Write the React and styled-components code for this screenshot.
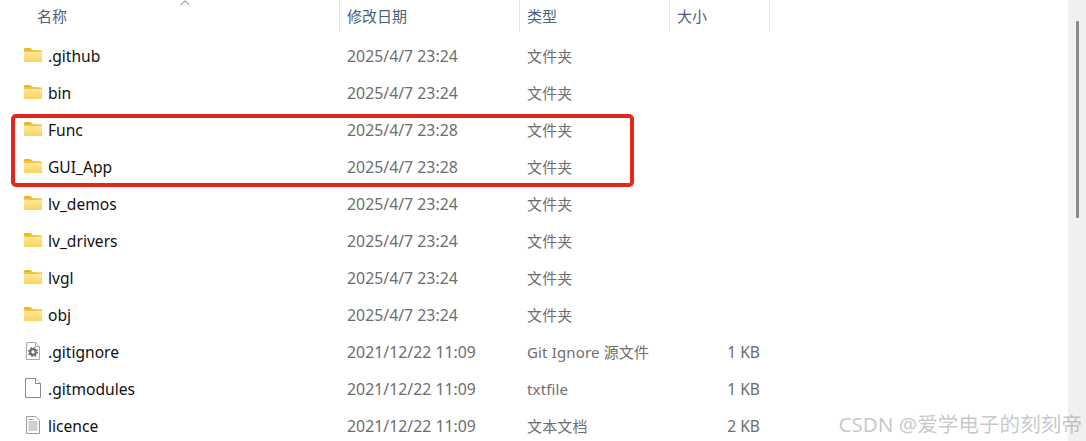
import React from 'react';
import styled, { createGlobalStyle } from 'styled-components';

const GlobalStyle = createGlobalStyle`
  html, body {
    margin: 0;
    padding: 0;
    background: #fff;
    overflow: hidden;
  }
`;

const Page = styled.div`
  position: relative;
  width: 1086px;
  height: 441px;
  overflow: hidden;
  display: flex;
  background: #fff;
  font-family: "Noto Sans", "Noto Sans CJK SC", sans-serif;
  font-size: 15px;
`;

const List = styled.div`
  flex: 1;
  min-width: 0;
`;

const HeaderRow = styled.div`
  display: grid;
  grid-template-columns: 340px 180px 150px 100px;
  height: 32px;
  margin-bottom: 5px;
`;

const HeaderCell = styled.div`
  position: relative;
  border-right: 1px solid #e5e5e5;
  padding-left: ${(p) => p.$pad || 7}px;
  padding-bottom: 2px;
  display: flex;
  align-items: center;
  color: #4c607a;
  font-size: 15px;
`;

const SortArrow = styled.svg`
  position: absolute;
  left: 180px;
  top: 0;
`;

const Row = styled.div`
  display: grid;
  grid-template-columns: 339px 180px 150px 91px;
  height: 37px;
  align-items: center;
`;

const NameCell = styled.div`
  display: flex;
  align-items: center;
  padding-left: 24px;
  color: #111;
  font-size: 15.6px;
`;

const IconBox = styled.span`
  width: 24px;
  height: 20px;
  flex: none;
  display: flex;
  align-items: center;
  margin-bottom: 1px;
`;

const DateCell = styled.div`
  padding-left: 8px;
  color: #6d6d6d;
  font-size: 15.85px;
`;

const TypeCell = styled.div`
  padding-left: 8px;
  color: #6d6d6d;
  letter-spacing: 0.15px;
`;

const SizeCell = styled.div`
  text-align: right;
  color: #6d6d6d;
  font-size: 15.6px;
`;

const Scrollbar = styled.div`
  width: 18px;
  flex: none;
  background: #f0f0f0;
  padding: 21px 0 0 8px;
  box-sizing: border-box;
`;

const Thumb = styled.div`
  width: 3px;
  height: 197px;
  border-radius: 1px;
  background: #8a8a8a;
`;

const Highlight = styled.div`
  position: absolute;
  left: 11px;
  top: 114px;
  width: 623px;
  height: 73px;
  box-sizing: border-box;
  border: 4px solid #e5261c;
  border-radius: 5px;
`;

const Watermark = styled.div`
  position: absolute;
  right: 4px;
  bottom: 4px;
  font-size: 20.6px;
  line-height: 26px;
  color: rgba(130, 130, 130, 0.45);
  white-space: nowrap;
`;

function FolderIcon() {
  return (
    <svg width="18" height="14" viewBox="0 0 18 14">
      <defs>
        <linearGradient id="folderFill" x1="0" y1="0" x2="0" y2="1">
          <stop offset="0" stopColor="#fde9a0" />
          <stop offset="1" stopColor="#fbd35f" />
        </linearGradient>
      </defs>
      <path d="M0 1.2C0 .5.5 0 1.2 0h4.600c.5 0 .9.2 1.200.5L8.500 2H0z" fill="#eeb420" />
      <path d="M0 3h17c.6 0 1 .4 1 1v9.500c0 .3-.2.5-.5.5H.5c-.3 0-.5-.2-.5-.5z" fill="url(#folderFill)" />
      <path d="M0 2h8.500L18 2.500V4H0z" fill="#f5c33a" />
    </svg>
  );
}

function GearFileIcon() {
  return (
    <svg width="18" height="20" viewBox="0 0 18 20">
      <path d="M2.500 1.500h9l4 4v13h-13z" fill="#fff" stroke="#a4a8ad" />
      <path d="M11.500 1.500v4h4" fill="#f1f1f1" stroke="#a4a8ad" />
      <circle cx="9" cy="11" r="2.800" fill="none" stroke="#5f7382" strokeWidth="2.200" />
      <circle cx="9" cy="11" r="4.400" fill="none" stroke="#5f7382" strokeWidth="1.400" strokeDasharray="1.800 1.660" />
    </svg>
  );
}

function BlankFileIcon() {
  return (
    <svg width="18" height="20" viewBox="0 0 18 20">
      <path d="M1.500.5h10l5 5v14h-15z" fill="#fff" stroke="#8a8a8a" />
      <path d="M11.500.5v5h5" fill="#fff" stroke="#8a8a8a" />
    </svg>
  );
}

function TextFileIcon() {
  return (
    <svg width="18" height="20" viewBox="0 0 18 20">
      <path d="M2.500 1.500h9l4 4v13h-13z" fill="#fff" stroke="#9a9a9a" />
      <path d="M4.500 7h9M4.500 9h9M4.500 11h9M4.500 13h9M4.500 15h9" stroke="#a0a0a0" />
      <path d="M4.500 4.500h5" stroke="#a0a0a0" />
    </svg>
  );
}

const icons = {
  folder: FolderIcon,
  gear: GearFileIcon,
  blank: BlankFileIcon,
  text: TextFileIcon,
};

const files = [
  { name: '.github', date: '2025/4/7 23:24', type: '文件夹', icon: 'folder' },
  { name: 'bin', date: '2025/4/7 23:24', type: '文件夹', icon: 'folder' },
  { name: 'Func', date: '2025/4/7 23:28', type: '文件夹', icon: 'folder' },
  { name: 'GUI_App', date: '2025/4/7 23:28', type: '文件夹', icon: 'folder' },
  { name: 'lv_demos', date: '2025/4/7 23:24', type: '文件夹', icon: 'folder' },
  { name: 'lv_drivers', date: '2025/4/7 23:24', type: '文件夹', icon: 'folder' },
  { name: 'lvgl', date: '2025/4/7 23:24', type: '文件夹', icon: 'folder' },
  { name: 'obj', date: '2025/4/7 23:24', type: '文件夹', icon: 'folder' },
  { name: '.gitignore', date: '2021/12/22 11:09', type: 'Git Ignore 源文件', size: '1 KB', icon: 'gear' },
  { name: '.gitmodules', date: '2021/12/22 11:09', type: 'txtfile', size: '1 KB', icon: 'blank' },
  { name: 'licence', date: '2021/12/22 11:09', type: '文本文档', size: '2 KB', icon: 'text' },
];

export default function App() {
  return (
    <Page>
      <GlobalStyle />
      <List>
        <HeaderRow>
          <HeaderCell $pad={37}>
            名称
            <SortArrow width="10" height="6" viewBox="0 0 10 6">
              <path d="M.5 5 5 .8 9.500 5" fill="none" stroke="#6b7785" />
            </SortArrow>
          </HeaderCell>
          <HeaderCell>修改日期</HeaderCell>
          <HeaderCell>类型</HeaderCell>
          <HeaderCell>大小</HeaderCell>
        </HeaderRow>
        {files.map((f) => {
          const Icon = icons[f.icon];
          return (
            <Row key={f.name}>
              <NameCell>
                <IconBox>
                  <Icon />
                </IconBox>
                {f.name}
              </NameCell>
              <DateCell>{f.date}</DateCell>
              <TypeCell>{f.type}</TypeCell>
              <SizeCell>{f.size}</SizeCell>
            </Row>
          );
        })}
      </List>
      <Scrollbar>
        <Thumb />
      </Scrollbar>
      <Highlight />
      <Watermark>CSDN @爱学电子的刻刻帝</Watermark>
    </Page>
  );
}
